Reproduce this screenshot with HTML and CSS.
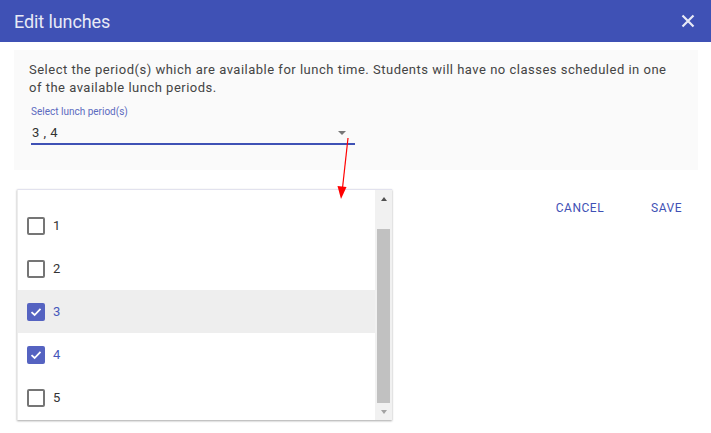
FILE: index.html
```html
<!DOCTYPE html>
<html>
<head>
<meta charset="utf-8">
<link rel="stylesheet" href="styles.css">
</head>
<body>
<div class="dialog">
  <header class="dlg-header">
    <h1 class="dlg-title">Edit lunches</h1>
    <svg class="close" width="14" height="14" viewBox="0 0 14 14"><path d="M1.5 1.5 L12.5 12.5 M12.5 1.5 L1.5 12.5" stroke="#e8eaf6" stroke-width="2.2" fill="none"/></svg>
  </header>
  <div class="dlg-body">
    <div class="panel">
      <p class="desc">Select the period(s) which are available for lunch time. Students will have no classes scheduled in one of the available lunch periods.</p>
      <div class="field">
        <div class="field-label">Select lunch period(s)</div>
        <div class="field-value">
          <span>3 , 4</span>
          <span class="caret"></span>
        </div>
      </div>
    </div>
    <div class="actions">
      <button class="btn">CANCEL</button>
      <button class="btn">SAVE</button>
    </div>
  </div>
</div>

<div class="menu">
  <ul class="options">
    <li class="opt"><span class="cb"></span><span>1</span></li>
    <li class="opt"><span class="cb"></span><span>2</span></li>
    <li class="opt active checked"><span class="cb"><svg width="14" height="14" viewBox="0 0 14 14"><path d="M2.5 7.2 L5.6 10 L11.5 3.8" stroke="#fff" stroke-width="1.8" fill="none"/></svg></span><span>3</span></li>
    <li class="opt checked"><span class="cb"><svg width="14" height="14" viewBox="0 0 14 14"><path d="M2.5 7.2 L5.6 10 L11.5 3.8" stroke="#fff" stroke-width="1.8" fill="none"/></svg></span><span>4</span></li>
    <li class="opt"><span class="cb"></span><span>5</span></li>
  </ul>
  <div class="scrollbar">
    <div class="sb-btn"><span class="tri-up"></span></div>
    <div class="sb-track"><div class="sb-thumb"></div></div>
    <div class="sb-btn"><span class="tri-down"></span></div>
  </div>
</div>

<svg class="pointer" width="30" height="70" viewBox="0 0 30 70">
  <line x1="18" y1="8" x2="12.5" y2="58" stroke="#ff0000" stroke-width="1.2"/>
  <polygon points="7.5,56 16.5,57 11,69" fill="#ff0000"/>
</svg>
</body>
</html>
```

FILE: styles.css
```css
* { box-sizing: border-box; }
html, body { margin: 0; padding: 0; background: #fff; }
body {
  font-family: Roboto, "Noto Sans", Arial, sans-serif;
  width: 711px;
  height: 433px;
  overflow: hidden;
  position: relative;
}
.dlg-header {
  height: 42px;
  background: #3f51b5;
  display: flex;
  align-items: center;
  justify-content: space-between;
  padding: 0 16px 0 14px;
}
.dlg-title {
  margin: 0;
  font-size: 18px;
  font-weight: 400;
  color: #e8eaf6;
  letter-spacing: -0.1px;
}
.close { display: block; }
.dlg-body {
  padding: 8px 13px 0 14px;
}
.panel {
  background: #fafafa;
  height: 120px;
  padding: 11px 24px 0 15px;
}
.desc {
  margin: 0;
  font-size: 13px;
  line-height: 18px;
  color: #444;
  letter-spacing: 0.5px;
}
.field {
  width: 324px;
  margin-left: 2px;
  margin-top: 9px;
}
.field-label {
  font-size: 10px;
  line-height: 12px;
  color: #5c6bc0;
}
.field-value {
  margin-top: 6px;
  height: 21px;
  border-bottom: 2px solid #3f51b5;
  display: flex;
  justify-content: space-between;
  align-items: flex-start;
  font-size: 13px;
  line-height: 18px;
  color: #333;
  padding: 0 9px 0 1px;
  letter-spacing: 0.5px;
}
.caret {
  width: 0; height: 0;
  margin-top: 7px;
  border-left: 4px solid transparent;
  border-right: 4px solid transparent;
  border-top: 4px solid #777;
}
.actions {
  display: flex;
  justify-content: flex-end;
  margin-top: 20px;
  gap: 15px;
}
.btn {
  background: none;
  border: 0;
  font-family: Roboto, "Noto Sans", Arial, sans-serif;
  font-size: 12px;
  color: #3f51b5;
  height: 36px;
  padding: 0 16px;
  letter-spacing: 0.5px;
}
.menu {
  position: absolute;
  left: 17px;
  top: 189px;
  width: 375px;
  height: 231px;
  background: #fff;
  border-top: 1px solid #e2e2ee;
  border-left: 1px solid #ececec;
  box-shadow: 0 1px 2px rgba(0,0,0,0.35);
  display: flex;
}
.options {
  list-style: none;
  margin: 0;
  padding: 14px 0 0 0;
  flex: 1;
}
.opt {
  height: 43px;
  display: flex;
  align-items: center;
  gap: 8px;
  padding-left: 9px;
  font-size: 13px;
  color: #333;
}
.opt.active { background: #eeeeee; }
.opt.checked { color: #4757bb; }
.cb {
  width: 18px;
  height: 18px;
  border: 2px solid #757575;
  border-radius: 2px;
  display: flex;
  align-items: center;
  justify-content: center;
}
.opt.checked .cb {
  background: #5563c1;
  border-color: #5563c1;
}
.scrollbar {
  width: 17px;
  background: #f1f1f1;
  display: flex;
  flex-direction: column;
}
.sb-btn {
  height: 17px;
  display: flex;
  align-items: center;
  justify-content: center;
}
.sb-track {
  flex: 1;
  padding: 22px 2px 0 2px;
}
.sb-thumb {
  height: 174px;
  background: #c1c1c1;
}
.tri-up {
  width: 0; height: 0;
  border-left: 3.5px solid transparent;
  border-right: 3.5px solid transparent;
  border-bottom: 4px solid #505050;
}
.tri-down {
  width: 0; height: 0;
  border-left: 3.5px solid transparent;
  border-right: 3.5px solid transparent;
  border-top: 4px solid #a3a3a3;
}
.pointer {
  position: absolute;
  left: 330px;
  top: 130px;
}
```
